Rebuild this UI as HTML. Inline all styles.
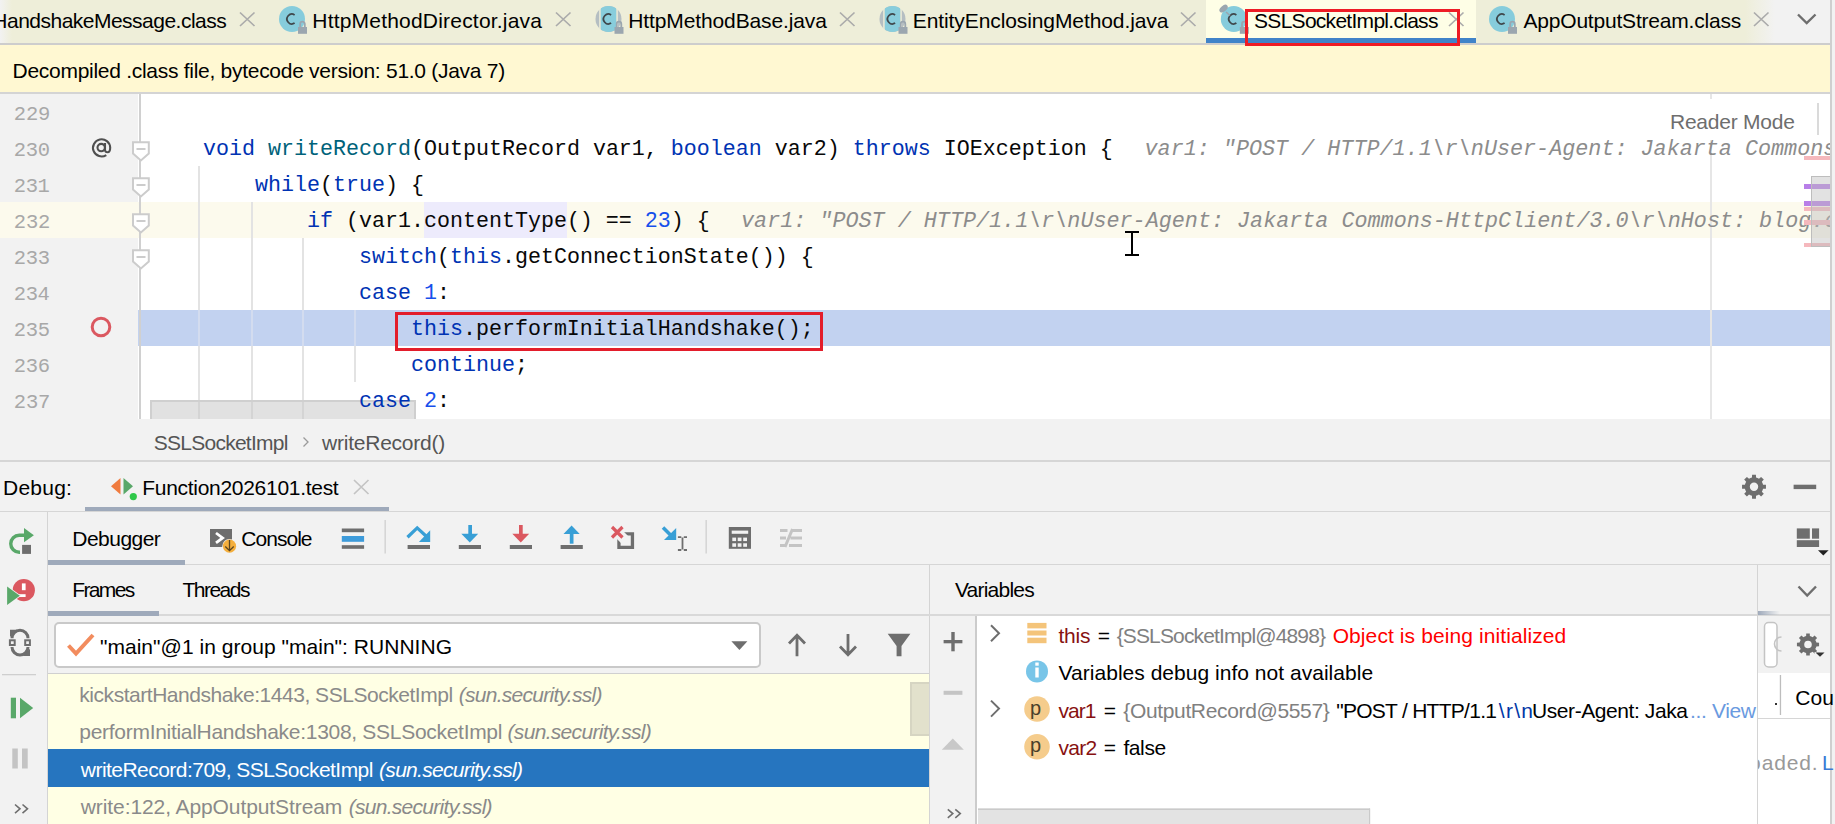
<!DOCTYPE html>
<html><head><meta charset="utf-8"><style>
html,body{margin:0;padding:0;width:1835px;height:824px;overflow:hidden;background:#F2F2F2;}
#root{position:relative;width:1835px;height:824px;overflow:hidden;}
#root div{position:absolute;white-space:pre;}
#root svg{position:absolute;overflow:visible;}
</style></head><body><div id="root">
<div style="left:0px;top:0px;width:1835px;height:43px;background:#EEEED9;"></div>
<div style="left:1206px;top:0px;width:270px;height:38px;background:#FEFEE6;"></div>
<div style="left:1206px;top:38px;width:270px;height:7px;background:#4083C9;"></div>
<div style="left:1745px;top:0px;width:90px;height:43px;background:linear-gradient(90deg,rgba(242,242,242,0) 0px,#F2F2F2 30px);"></div>
<div style="left:0px;top:0px;width:12px;height:43px;background:linear-gradient(90deg,#F2F2F2 0px,rgba(238,238,217,0) 12px);"></div>
<div style="left:0px;top:43px;width:1830px;height:2px;background:#CDCDCD;"></div>
<div style="left:0px;top:45px;width:1830px;height:47px;background:#FFF8D2;"></div>
<div style="left:0px;top:92px;width:1830px;height:2px;background:#D4D4D4;"></div>
<div style="left:0px;top:94px;width:1830px;height:325px;background:#FFFFFF;"></div>
<div style="left:0px;top:94px;width:138px;height:325px;background:#F2F2F2;"></div>
<div style="left:0px;top:202px;width:1830px;height:36px;background:#FCFAED;"></div>
<div style="left:424px;top:202px;width:143px;height:36px;background:#EDEBFC;"></div>
<div style="left:138px;top:310px;width:1692px;height:36px;background:#C2D2F0;"></div>
<div style="left:139px;top:94px;width:2px;height:325px;background:#D0D0D0;"></div>
<div style="left:198px;top:166px;width:2px;height:253px;background:#E3E3E3;"></div>
<div style="left:251px;top:202px;width:2px;height:217px;background:#E3E3E3;"></div>
<div style="left:302px;top:238px;width:2px;height:181px;background:#E3E3E3;"></div>
<div style="left:354px;top:310px;width:2px;height:72px;background:#E3E3E3;"></div>
<div style="left:198px;top:310px;width:2px;height:36px;background:#D3DCEF;"></div>
<div style="left:251px;top:310px;width:2px;height:36px;background:#D3DCEF;"></div>
<div style="left:302px;top:310px;width:2px;height:36px;background:#D3DCEF;"></div>
<div style="left:354px;top:310px;width:2px;height:36px;background:#D3DCEF;"></div>
<div style="left:1710px;top:94px;width:2px;height:325px;background:#E6E6E6;"></div>
<div style="left:1640px;top:99px;width:190px;height:41px;background:#FFFFFF;"></div>
<svg style="left:131px;top:141px" width="20" height="21" viewBox="0 0 20 21"><path d="M2 1.2 H17.8 V12.5 L9.9 19.5 L2 12.5 Z" fill="#FFFFFF" stroke="#CCCCCC" stroke-width="2"/><rect x="5.5" y="7" width="9" height="2" fill="#CCCCCC"/></svg>
<svg style="left:131px;top:177px" width="20" height="21" viewBox="0 0 20 21"><path d="M2 1.2 H17.8 V12.5 L9.9 19.5 L2 12.5 Z" fill="#FFFFFF" stroke="#CCCCCC" stroke-width="2"/><rect x="5.5" y="7" width="9" height="2" fill="#CCCCCC"/></svg>
<svg style="left:131px;top:213px" width="20" height="21" viewBox="0 0 20 21"><path d="M2 1.2 H17.8 V12.5 L9.9 19.5 L2 12.5 Z" fill="#FFFFFF" stroke="#CCCCCC" stroke-width="2"/><rect x="5.5" y="7" width="9" height="2" fill="#CCCCCC"/></svg>
<svg style="left:131px;top:249px" width="20" height="21" viewBox="0 0 20 21"><path d="M2 1.2 H17.8 V12.5 L9.9 19.5 L2 12.5 Z" fill="#FFFFFF" stroke="#CCCCCC" stroke-width="2"/><rect x="5.5" y="7" width="9" height="2" fill="#CCCCCC"/></svg>
<svg style="left:89px;top:314px" width="24" height="26"><circle cx="12" cy="13" r="8.8" fill="none" stroke="#DB5860" stroke-width="3"/></svg>
<div style="left:150px;top:400px;width:266px;height:19px;background:rgba(200,200,200,0.55);border:2px solid #CFCFCF;border-bottom:none;box-sizing:border-box;"></div>
<div style="left:0px;top:419px;width:1830px;height:41px;background:#F2F2F2;"></div>
<div style="left:0px;top:460px;width:1830px;height:2px;background:#D6D6D6;"></div>
<div style="left:1830px;top:0px;width:2px;height:824px;background:#CFCFCF;"></div>
<div style="left:1832px;top:0px;width:3px;height:824px;background:#F2F2F2;"></div>
<div style="left:0px;top:462px;width:1830px;height:49px;background:#F2F2F2;"></div>
<div style="left:85px;top:507px;width:304px;height:4px;background:#9FAABB;"></div>
<div style="left:0px;top:511px;width:1830px;height:1px;background:#D6D6D6;"></div>
<div style="left:47px;top:512px;width:1px;height:312px;background:#D4D4D4;"></div>
<div style="left:48px;top:564px;width:1782px;height:1px;background:#D6D6D6;"></div>
<div style="left:48px;top:560px;width:137px;height:5px;background:#9FAABB;"></div>
<div style="left:48px;top:614px;width:881px;height:2px;background:#D9D9D9;"></div>
<div style="left:48px;top:611px;width:111px;height:5px;background:#9FAABB;"></div>
<div style="left:929px;top:565px;width:1px;height:259px;background:#D4D4D4;"></div>
<div style="left:929px;top:614px;width:829px;height:2px;background:#D9D9D9;"></div>
<div style="left:1757px;top:565px;width:1px;height:259px;background:#D4D4D4;"></div>
<div style="left:1758px;top:614px;width:72px;height:2px;background:#D9D9D9;"></div>
<div style="left:48px;top:673px;width:881px;height:1px;background:#D0D0D0;"></div>
<div style="left:48px;top:674px;width:881px;height:150px;background:#FFFFE4;"></div>
<div style="left:48px;top:749px;width:881px;height:38px;background:#2675BF;"></div>
<div style="left:975px;top:616px;width:2px;height:208px;background:#CCCCCC;"></div>
<div style="left:977px;top:616px;width:780px;height:208px;background:#FFFFFF;"></div>
<div style="left:1758px;top:616px;width:72px;height:57px;background:#F2F2F2;"></div>
<div style="left:1758px;top:673px;width:72px;height:151px;background:#FFFFFF;"></div>
<div style="left:1758px;top:718px;width:72px;height:1px;background:#D6D6D6;"></div>
<div style="left:54px;top:622px;width:707px;height:46px;background:#FFFFFF;border:2px solid #C9C9C9;border-radius:5px;box-sizing:border-box;"></div>
<div style="left:910px;top:682px;width:19px;height:54px;background:#E2E1CC;border:2px solid #D6D5C2;border-right:none;box-sizing:border-box;"></div>
<svg style="left:0;top:0" width="1835" height="824"><circle cx="292" cy="19" r="13" fill="#86CCDC"/><path d="M294.6 14.9 A4.9 4.9 0 1 0 294.6 23.1" fill="none" stroke="#3F474B" stroke-width="1.8"/><path d="M300.2 27.5 V24 A2.3 2.3 0 0 1 304.8 24 V27.5" fill="none" stroke="#9BA6AF" stroke-width="1.8"/><rect x="298" y="27" width="9" height="6.8" fill="#9BA6AF"/><clipPath id="cp608"><rect x="600.8" y="5" width="15.4" height="28"/></clipPath><circle cx="608.5" cy="19" r="13" fill="#B5BEC2"/><rect x="599.2" y="5" width="1.6" height="28" fill="#EEEED9"/><rect x="616.2" y="5" width="1.6" height="28" fill="#EEEED9"/><circle cx="608.5" cy="19" r="13" fill="#88CDDC" clip-path="url(#cp608)"/><path d="M611.1 14.9 A4.9 4.9 0 1 0 611.1 23.1" fill="none" stroke="#3F474B" stroke-width="1.8"/><path d="M616.7 27.5 V24 A2.3 2.3 0 0 1 621.3 24 V27.5" fill="none" stroke="#9BA6AF" stroke-width="1.8"/><rect x="614.5" y="27" width="9" height="6.8" fill="#9BA6AF"/><clipPath id="cp892"><rect x="884.8" y="5" width="15.4" height="28"/></clipPath><circle cx="892.5" cy="19" r="13" fill="#B5BEC2"/><rect x="883.2" y="5" width="1.6" height="28" fill="#EEEED9"/><rect x="900.2" y="5" width="1.6" height="28" fill="#EEEED9"/><circle cx="892.5" cy="19" r="13" fill="#88CDDC" clip-path="url(#cp892)"/><path d="M895.1 14.9 A4.9 4.9 0 1 0 895.1 23.1" fill="none" stroke="#3F474B" stroke-width="1.8"/><path d="M900.7 27.5 V24 A2.3 2.3 0 0 1 905.3 24 V27.5" fill="none" stroke="#9BA6AF" stroke-width="1.8"/><rect x="898.5" y="27" width="9" height="6.8" fill="#9BA6AF"/><circle cx="1233.8" cy="19" r="13" fill="#86CCDC"/><path d="M1236.3999999999999 14.9 A4.9 4.9 0 1 0 1236.3999999999999 23.1" fill="none" stroke="#3F474B" stroke-width="1.8"/><path d="M1242.0 27.5 V24 A2.3 2.3 0 0 1 1246.6 24 V27.5" fill="none" stroke="#9BA6AF" stroke-width="1.8"/><rect x="1239.8" y="27" width="9" height="6.8" fill="#9BA6AF"/><circle cx="1502" cy="19" r="13" fill="#86CCDC"/><path d="M1504.6 14.9 A4.9 4.9 0 1 0 1504.6 23.1" fill="none" stroke="#3F474B" stroke-width="1.8"/><path d="M1510.2 27.5 V24 A2.3 2.3 0 0 1 1514.8 24 V27.5" fill="none" stroke="#9BA6AF" stroke-width="1.8"/><rect x="1508" y="27" width="9" height="6.8" fill="#9BA6AF"/><ellipse cx="1223.6" cy="8.6" rx="4.8" ry="2.9" transform="rotate(-40 1223.6 8.6)" fill="#9BA6AF"/><path d="M1226 12 L1230 15.5" stroke="#9BA6AF" stroke-width="1.6"/><path d="M240 12.5 L254.5 26 M254.5 12.5 L240 26" stroke="#ABABAB" stroke-width="1.7" fill="none"/><path d="M556 12.5 L570.5 26 M570.5 12.5 L556 26" stroke="#ABABAB" stroke-width="1.7" fill="none"/><path d="M840 12.5 L854.5 26 M854.5 12.5 L840 26" stroke="#ABABAB" stroke-width="1.7" fill="none"/><path d="M1181 12.5 L1195.5 26 M1195.5 12.5 L1181 26" stroke="#ABABAB" stroke-width="1.7" fill="none"/><path d="M1449 12.5 L1463.5 26 M1463.5 12.5 L1449 26" stroke="#ABABAB" stroke-width="1.7" fill="none"/><path d="M1754 12.5 L1768.5 26 M1768.5 12.5 L1754 26" stroke="#ABABAB" stroke-width="1.7" fill="none"/><circle cx="101.2" cy="147.6" r="3.7" stroke="#505050" stroke-width="2.1" fill="none"/><path d="M105 143 V150 Q105.2 152.3 107.6 152.3 Q110.2 152.3 110.2 147.6 A8.6 8.6 0 1 0 106.3 155.1" stroke="#505050" stroke-width="2.1" fill="none"/><path d="M1798 14.5 L1806.7 23 L1815.5 14.5" fill="none" stroke="#6E6E6E" stroke-width="2.4"/><path d="M120.5 478 L111 486.2 L120.5 494.5 Z" fill="#F07B3F"/><path d="M123.5 478 L133 486.2 L123.5 494.5 Z" fill="#59A869"/><circle cx="133.3" cy="496.6" r="4.6" fill="#F2F2F2"/><circle cx="133.3" cy="496.6" r="3.6" fill="#2FC84A"/><path d="M354 480 L368.5 494 M368.5 480 L354 494" stroke="#C4C4C4" stroke-width="1.7" fill="none"/><path d="M1763.08,484.67 L1765.95,484.77 L1765.95,488.63 L1763.08,488.73 L1762.59,490.26 L1761.85,491.68 L1763.81,493.78 L1761.08,496.51 L1758.98,494.55 L1757.56,495.29 L1756.03,495.78 L1755.93,498.65 L1752.07,498.65 L1751.97,495.78 L1750.44,495.29 L1749.02,494.55 L1746.92,496.51 L1744.19,493.78 L1746.15,491.68 L1745.41,490.26 L1744.92,488.73 L1742.05,488.63 L1742.05,484.77 L1744.92,484.67 L1745.41,483.14 L1746.15,481.72 L1744.19,479.62 L1746.92,476.89 L1749.02,478.85 L1750.44,478.11 L1751.97,477.62 L1752.07,474.75 L1755.93,474.75 L1756.03,477.62 L1757.56,478.11 L1758.98,478.85 L1761.08,476.89 L1763.81,479.62 L1761.85,481.72 L1762.59,483.14 Z M1758.2,486.7 A4.2 4.2 0 1 0 1749.8,486.7 A4.2 4.2 0 1 0 1758.2,486.7 Z" fill="#6E6E6E" fill-rule="evenodd"/><rect x="1793.6" y="484.7" width="22.6" height="4.4" fill="#6E6E6E"/><path d="M24 535.2 H19.25 A8.5 8.5 0 0 0 19.25 552.2 H20" fill="none" stroke="#59A869" stroke-width="3.4"/><path d="M24 528.1 L24 542.3 L33.9 535.3 Z" fill="#59A869"/><rect x="22.1" y="544.9" width="8.9" height="9" fill="#6E6E6E"/><circle cx="23.8" cy="590.2" r="11.1" fill="#DB5860"/><rect x="21.9" y="583.4" width="3.7" height="6.8" fill="#FFFFFF"/><rect x="19" y="594.2" width="6.6" height="2.8" fill="#FFFFFF"/><path d="M7.1 586.5 L7.1 605.1 L19.8 595.8 Z" fill="#59A869" stroke="#F2F2F2" stroke-width="1.6" paint-order="stroke"/><path d="M12 638.3 A8 8 0 0 1 28 638.3" fill="none" stroke="#6E6E6E" stroke-width="3"/><path d="M10 629.8 L17 629.8 L10 637 Z" fill="#6E6E6E"/><path d="M28 647 A8 8 0 0 1 12 647" fill="none" stroke="#6E6E6E" stroke-width="3"/><path d="M30 648.7 L30 656 L23 656 Z" fill="#6E6E6E"/><rect x="9.9" y="640.3" width="4.8" height="4.7" fill="none" stroke="#6E6E6E" stroke-width="2"/><rect x="25.2" y="640.3" width="4.7" height="4.7" fill="none" stroke="#6E6E6E" stroke-width="2"/><rect x="2" y="674" width="34" height="1.3" fill="#CFCFCF"/><rect x="10.8" y="697.7" width="5.2" height="20.6" fill="#59A869"/><path d="M20 697.7 L33.2 708 L20 718.3 Z" fill="#59A869"/><rect x="12.3" y="748.5" width="5.5" height="20" fill="#C4C4C4"/><rect x="22" y="748.5" width="5.7" height="20" fill="#C4C4C4"/><path d="M15 804.5 L20 808.8 L15 813.1 M22.5 804.5 L27.5 808.8 L22.5 813.1" fill="none" stroke="#6E6E6E" stroke-width="1.6"/><rect x="210" y="529" width="22" height="18" fill="#6E6E6E"/><path d="M216 533 L222.6 537.9 L216 542.8" fill="none" stroke="#FFFFFF" stroke-width="2.8"/><circle cx="229.5" cy="546.2" r="7.2" fill="#F2F2F2"/><circle cx="229.5" cy="546.2" r="6.6" fill="#F4AF3D"/><path d="M229.5 540 V550.5 M225.3 546.5 L229.5 550.6 L233.7 546.5" fill="none" stroke="#5A4520" stroke-width="1.3"/><rect x="341.8" y="528.5" width="22.3" height="3.7" fill="#6E6E6E"/><rect x="341.8" y="536" width="22.3" height="5.8" fill="#3D9BDA"/><rect x="341.8" y="545.2" width="22.3" height="3.6" fill="#6E6E6E"/><rect x="384.5" y="520" width="1.3" height="33.5" fill="#CFCFCF"/><rect x="705.5" y="520" width="1.3" height="33.5" fill="#CFCFCF"/><path d="M407.5 537.3 L417.2 527.9 L426.5 536.5" fill="none" stroke="#389FD6" stroke-width="3.3"/><path d="M430.2 530.2 L430.2 541.9 L418.9 541.9 Z" fill="#389FD6"/><rect x="407.6" y="545" width="22.399999999999977" height="4" fill="#6E6E6E"/><rect x="468.3" y="525" width="3.7" height="10" fill="#389FD6"/><path d="M461.3 533.8 L478.2 533.8 L469.8 542.6 Z" fill="#389FD6"/><rect x="458.8" y="545" width="22.19999999999999" height="4" fill="#6E6E6E"/><rect x="519" y="525" width="3.7" height="10" fill="#DB5860"/><path d="M512.3 533.8 L529.2 533.8 L520.8 542.6 Z" fill="#DB5860"/><rect x="509.8" y="545" width="22.19999999999999" height="4" fill="#6E6E6E"/><path d="M563.5 534 L571.6 525.6 L579.7 534 Z" fill="#389FD6"/><rect x="569.8" y="533.5" width="3.7" height="10.2" fill="#389FD6"/><rect x="560.6" y="545" width="22.199999999999932" height="4" fill="#6E6E6E"/><path d="M617.3 532.3 H634.1 V549 H617.3 Z M620.6 535.6 V545.7 H630.8 V535.6 Z" fill="#6E6E6E" fill-rule="evenodd"/><path d="M612 527 L625.5 540.5" stroke="#F2F2F2" stroke-width="10"/><path d="M612 527 L622.5 537.5 M622.5 527 L612 537.5" stroke="#DB5860" stroke-width="3.2"/><path d="M663 527.5 L671 535.5" stroke="#389FD6" stroke-width="3.6"/><path d="M676.2 528 L676.2 540 L664 540 Z" fill="#389FD6"/><path d="M677.9 537.1 H681.3 M683.8 537.1 H687 M677.9 550 H681.3 M683.8 550 H687 M682.5 537.5 V549.6" fill="none" stroke="#6E6E6E" stroke-width="1.8"/><rect x="728.8" y="527" width="22.2" height="21.8" fill="#6E6E6E"/><rect x="731.7" y="530.6" width="16.5" height="3.2" fill="#F2F2F2"/><rect x="732.3" y="537.6" width="3.8" height="3.5" fill="#F2F2F2"/><rect x="732.3" y="543.3" width="3.8" height="3.5" fill="#F2F2F2"/><rect x="737.7" y="537.6" width="3.8" height="3.5" fill="#F2F2F2"/><rect x="737.7" y="543.3" width="3.8" height="3.5" fill="#F2F2F2"/><rect x="743.2" y="537.6" width="3.8" height="3.5" fill="#F2F2F2"/><rect x="743.2" y="543.3" width="3.8" height="3.5" fill="#F2F2F2"/><path d="M780 530.4 H787.5 M791.5 530.4 H802 M780 538 H786 M790.5 538 H802 M780 545.6 H784.5 M789 545.6 H802 M785 547 L792.5 529" fill="none" stroke="#C4C4C4" stroke-width="3"/><rect x="1796.8" y="528.4" width="13" height="10.3" fill="#6E6E6E"/><rect x="1812" y="528.4" width="7.1" height="10.3" fill="#6E6E6E"/><rect x="1796.8" y="540.2" width="22.3" height="6.8" fill="#6E6E6E"/><path d="M1818 550.3 L1828.6 550.3 L1823.3 555.5 Z" fill="#222"/><path d="M1798.5 586.5 L1807.2 595.5 L1816 586.5" fill="none" stroke="#6E6E6E" stroke-width="2.4"/><path d="M68.5 645.5 L76 653.5 L93 635" fill="none" stroke="#F28C5E" stroke-width="4"/><path d="M731.4 641.2 L747.4 641.2 L739.4 650.1 Z" fill="#6E6E6E"/><path d="M797 656.2 V635.5 M789 643.5 L797 635.3 L805 643.5" fill="none" stroke="#6E6E6E" stroke-width="2.8"/><path d="M848 634 V654.5 M840 646.5 L848 654.7 L856 646.5" fill="none" stroke="#6E6E6E" stroke-width="2.8"/><path d="M887.7 633.8 H910.4 L901.5 646 V656.2 H896.6 V646 Z" fill="#6E6E6E"/><rect x="943.6" y="640" width="18.8" height="3.3" fill="#6E6E6E"/><rect x="951.3" y="632" width="3.4" height="19.3" fill="#6E6E6E"/><rect x="943.6" y="690.8" width="18.8" height="4" fill="#C4C4C4"/><path d="M941.8 749.8 L952.8 738.6 L963.8 749.8 Z" fill="#C8C8C8"/><path d="M947.8 809.3 L952.8 813.5999999999999 L947.8 817.9 M955.3 809.3 L960.3 813.5999999999999 L955.3 817.9" fill="none" stroke="#6E6E6E" stroke-width="1.6"/><rect x="978" y="808.5" width="392" height="16" fill="#E3E3E3"/><rect x="978" y="808.5" width="392" height="1.5" fill="#CACACA"/><rect x="1369" y="808.5" width="1.2" height="16" fill="#CACACA"/><path d="M991 625.3 L999 633.3 L991 641.3" fill="none" stroke="#6E6E6E" stroke-width="2"/><path d="M991 700.6 L999 708.6 L991 716.6" fill="none" stroke="#6E6E6E" stroke-width="2"/><rect x="1027.3" y="622.9" width="19.2" height="5.5" fill="#F4C47A"/><rect x="1027.3" y="630.5" width="19.2" height="5" fill="#F4C47A"/><rect x="1027.3" y="637.7" width="19.2" height="5.5" fill="#F4C47A"/><circle cx="1037" cy="671.4" r="11" fill="#78C5E8"/><rect x="1035.3" y="662.5" width="3.4" height="3.2" fill="#FFF"/><rect x="1035.3" y="667.5" width="3.4" height="10" fill="#FFF"/><circle cx="1037" cy="709" r="12.8" fill="#F5CC8C"/><circle cx="1037" cy="746.7" r="12.8" fill="#F5CC8C"/><rect x="1764.5" y="622.5" width="12.5" height="44.5" rx="4" fill="#FFFFFF" stroke="#C4C4C4" stroke-width="1.5"/><path d="M1781.5 637 A7 7 0 0 0 1781.5 651" fill="none" stroke="#C4C4C4" stroke-width="1.6"/><path d="M1816.39,642.62 L1819.06,642.72 L1819.06,646.28 L1816.39,646.38 L1815.95,647.79 L1815.26,649.11 L1817.08,651.06 L1814.56,653.58 L1812.61,651.76 L1811.29,652.45 L1809.88,652.89 L1809.78,655.56 L1806.22,655.56 L1806.12,652.89 L1804.71,652.45 L1803.39,651.76 L1801.44,653.58 L1798.92,651.06 L1800.74,649.11 L1800.05,647.79 L1799.61,646.38 L1796.94,646.28 L1796.94,642.72 L1799.61,642.62 L1800.05,641.21 L1800.74,639.89 L1798.92,637.94 L1801.44,635.42 L1803.39,637.24 L1804.71,636.55 L1806.12,636.11 L1806.22,633.44 L1809.78,633.44 L1809.88,636.11 L1811.29,636.55 L1812.61,637.24 L1814.56,635.42 L1817.08,637.94 L1815.26,639.89 L1815.95,641.21 Z M1811.8,644.5 A3.8 3.8 0 1 0 1804.2,644.5 A3.8 3.8 0 1 0 1811.8,644.5 Z" fill="#6E6E6E" fill-rule="evenodd"/><path d="M1814 652 L1825 652 L1819.5 657 Z" fill="#F2F2F2"/><path d="M1815.5 652.5 L1824.5 652.5 L1820 656.8 Z" fill="#333"/><rect x="1779.8" y="675" width="1.3" height="40" fill="#BDBDBD"/><rect x="1775" y="703" width="2" height="2" fill="#333"/><defs><linearGradient id="mg"><stop offset="0" stop-color="#9FAABB"/><stop offset="1" stop-color="#9FAABB" stop-opacity="0"/></linearGradient></defs><rect x="1758" y="611" width="22" height="4" fill="url(#mg)"/></svg>
<div style="left:-7.68px;top:10.22px;font-family:'Liberation Sans',sans-serif;font-size:21px;line-height:21px;color:#000;letter-spacing:-0.512px;">HandshakeMessage.class</div>
<div style="left:312.32px;top:10.22px;font-family:'Liberation Sans',sans-serif;font-size:21px;line-height:21px;color:#000;letter-spacing:0.198px;">HttpMethodDirector.java</div>
<div style="left:628.32px;top:10.22px;font-family:'Liberation Sans',sans-serif;font-size:21px;line-height:21px;color:#000;letter-spacing:-0.121px;">HttpMethodBase.java</div>
<div style="left:912.82px;top:10.22px;font-family:'Liberation Sans',sans-serif;font-size:21px;line-height:21px;color:#000;letter-spacing:-0.096px;">EntityEnclosingMethod.java</div>
<div style="left:1254.06px;top:10.22px;font-family:'Liberation Sans',sans-serif;font-size:21px;line-height:21px;color:#000;letter-spacing:-0.717px;">SSLSocketImpl.class</div>
<div style="left:1523.50px;top:10.22px;font-family:'Liberation Sans',sans-serif;font-size:21px;line-height:21px;color:#000;letter-spacing:-0.201px;">AppOutputStream.class</div>
<div style="left:12.52px;top:59.82px;font-family:'Liberation Sans',sans-serif;font-size:21px;line-height:21px;color:#000;letter-spacing:-0.279px;">Decompiled .class file, bytecode version: 51.0 (Java 7)</div>
<div style="left:13.87px;top:105.29px;font-family:'Liberation Mono',monospace;font-size:20.5px;line-height:20.5px;color:#A8A8A8;letter-spacing:-0.265px;">229</div>
<div style="left:13.87px;top:141.29px;font-family:'Liberation Mono',monospace;font-size:20.5px;line-height:20.5px;color:#A8A8A8;letter-spacing:-0.367px;">230</div>
<div style="left:13.87px;top:177.29px;font-family:'Liberation Mono',monospace;font-size:20.5px;line-height:20.5px;color:#A8A8A8;letter-spacing:-0.521px;">231</div>
<div style="left:13.87px;top:213.29px;font-family:'Liberation Mono',monospace;font-size:20.5px;line-height:20.5px;color:#A8A8A8;letter-spacing:-0.265px;">232</div>
<div style="left:13.87px;top:249.29px;font-family:'Liberation Mono',monospace;font-size:20.5px;line-height:20.5px;color:#A8A8A8;letter-spacing:-0.367px;">233</div>
<div style="left:13.87px;top:285.29px;font-family:'Liberation Mono',monospace;font-size:20.5px;line-height:20.5px;color:#A8A8A8;letter-spacing:-0.470px;">234</div>
<div style="left:13.87px;top:321.29px;font-family:'Liberation Mono',monospace;font-size:20.5px;line-height:20.5px;color:#A8A8A8;letter-spacing:-0.367px;">235</div>
<div style="left:13.87px;top:357.29px;font-family:'Liberation Mono',monospace;font-size:20.5px;line-height:20.5px;color:#A8A8A8;letter-spacing:-0.316px;">236</div>
<div style="left:13.87px;top:393.29px;font-family:'Liberation Mono',monospace;font-size:20.5px;line-height:20.5px;color:#A8A8A8;letter-spacing:-0.214px;">237</div>
<div style="left:151px;top:139.40px;font-family:'Liberation Mono',monospace;font-size:21.667px;line-height:21.667px;"><span style="color:#080808;">    </span><span style="color:#0033B3;">void</span><span style="color:#080808;"> </span><span style="color:#00627A;">writeRecord</span><span style="color:#080808;">(OutputRecord var1, </span><span style="color:#0033B3;">boolean</span><span style="color:#080808;"> var2) </span><span style="color:#0033B3;">throws</span><span style="color:#080808;"> IOException {</span></div>
<div style="left:1131.5px;top:139.34px;font-family:'Liberation Mono',monospace;font-size:21.75px;line-height:21.75px;"><span style="color:#8C8C8C;font-style:italic;"> var1: &quot;POST / HTTP/1.1\r\nUser-Agent: Jakarta Commons-HttpClient/3.0\r\nHost</span></div>
<div style="left:151px;top:175.40px;font-family:'Liberation Mono',monospace;font-size:21.667px;line-height:21.667px;"><span style="color:#080808;">        </span><span style="color:#0033B3;">while</span><span style="color:#080808;">(</span><span style="color:#0033B3;">true</span><span style="color:#080808;">) {</span></div>
<div style="left:151px;top:211.40px;font-family:'Liberation Mono',monospace;font-size:21.667px;line-height:21.667px;"><span style="color:#080808;">            </span><span style="color:#0033B3;">if</span><span style="color:#080808;"> (var1.contentType() == </span><span style="color:#1750EB;">23</span><span style="color:#080808;">) {</span></div>
<div style="left:728px;top:211.34px;font-family:'Liberation Mono',monospace;font-size:21.75px;line-height:21.75px;"><span style="color:#8C8C8C;font-style:italic;"> var1: &quot;POST / HTTP/1.1\r\nUser-Agent: Jakarta Commons-HttpClient/3.0\r\nHost: blog.csdn.net</span></div>
<div style="left:151px;top:247.40px;font-family:'Liberation Mono',monospace;font-size:21.667px;line-height:21.667px;"><span style="color:#080808;">                </span><span style="color:#0033B3;">switch</span><span style="color:#080808;">(</span><span style="color:#0033B3;">this</span><span style="color:#080808;">.getConnectionState()) {</span></div>
<div style="left:151px;top:283.40px;font-family:'Liberation Mono',monospace;font-size:21.667px;line-height:21.667px;"><span style="color:#080808;">                </span><span style="color:#0033B3;">case</span><span style="color:#080808;"> </span><span style="color:#1750EB;">1</span><span style="color:#080808;">:</span></div>
<div style="left:151px;top:319.40px;font-family:'Liberation Mono',monospace;font-size:21.667px;line-height:21.667px;"><span style="color:#080808;">                    </span><span style="color:#0033B3;">this</span><span style="color:#080808;">.performInitialHandshake();</span></div>
<div style="left:151px;top:355.40px;font-family:'Liberation Mono',monospace;font-size:21.667px;line-height:21.667px;"><span style="color:#080808;">                    </span><span style="color:#0033B3;">continue</span><span style="color:#080808;">;</span></div>
<div style="left:151px;top:391.40px;font-family:'Liberation Mono',monospace;font-size:21.667px;line-height:21.667px;"><span style="color:#080808;">                </span><span style="color:#0033B3;">case</span><span style="color:#080808;"> </span><span style="color:#1750EB;">2</span><span style="color:#080808;">:</span></div>
<div style="left:1830px;top:94px;width:2px;height:325px;background:#CFCFCF;"></div>
<div style="left:1832px;top:94px;width:3px;height:325px;background:#F2F2F2;"></div>
<div style="left:1245px;top:9px;width:215px;height:37px;background:transparent;border:3px solid #EE1C25;box-sizing:border-box;"></div>
<div style="left:395px;top:312px;width:428px;height:39px;background:transparent;border:3px solid #E31D2B;box-sizing:border-box;"></div>
<div style="left:1670.02px;top:111.02px;font-family:'Liberation Sans',sans-serif;font-size:21px;line-height:21px;color:#6E6E6E;letter-spacing:-0.244px;">Reader Mode</div>
<div style="left:1817px;top:103px;width:2px;height:32px;background:#DADADA;"></div>
<div style="left:1804px;top:156px;width:26px;height:4px;background:#F5B8BD;"></div>
<div style="left:1804px;top:184px;width:26px;height:5px;background:#B87FE8;"></div>
<div style="left:1804px;top:201px;width:26px;height:5px;background:#B87FE8;"></div>
<div style="left:1804px;top:207px;width:26px;height:4px;background:#F5B8BD;"></div>
<div style="left:1804px;top:220px;width:26px;height:5px;background:#F5B8BD;"></div>
<div style="left:1804px;top:243px;width:26px;height:4px;background:#F5B8BD;"></div>
<div style="left:1811px;top:176px;width:19px;height:71px;background:rgba(190,190,190,0.45);border:1.5px solid #BDBDBD;border-right:none;box-sizing:border-box;"></div>
<div style="left:1125px;top:231px;width:14px;height:2px;background:#000;"></div>
<div style="left:1131px;top:232px;width:2px;height:23px;background:#000;"></div>
<div style="left:1125px;top:254px;width:14px;height:2px;background:#000;"></div>
<div style="left:153.75px;top:432.22px;font-family:'Liberation Sans',sans-serif;font-size:21px;line-height:21px;color:#555555;letter-spacing:-0.744px;">SSLSocketImpl</div>
<div style="left:322.11px;top:432.22px;font-family:'Liberation Sans',sans-serif;font-size:21px;line-height:21px;color:#555555;letter-spacing:-0.246px;">writeRecord()</div>
<svg style="left:302px;top:436px" width="8" height="12"><path d="M1.5 1.5 L6 6 L1.5 10.5" fill="none" stroke="#9A9A9A" stroke-width="1.3"/></svg>
<div style="left:3.12px;top:476.62px;font-family:'Liberation Sans',sans-serif;font-size:21px;line-height:21px;color:#000;letter-spacing:0.209px;">Debug:</div>
<div style="left:142.22px;top:476.62px;font-family:'Liberation Sans',sans-serif;font-size:21px;line-height:21px;color:#000;letter-spacing:-0.291px;">Function2026101.test</div>
<div style="left:72.32px;top:528.02px;font-family:'Liberation Sans',sans-serif;font-size:21px;line-height:21px;color:#000;letter-spacing:-0.529px;">Debugger</div>
<div style="left:241.35px;top:528.02px;font-family:'Liberation Sans',sans-serif;font-size:21px;line-height:21px;color:#000;letter-spacing:-0.980px;">Console</div>
<div style="left:72.32px;top:579.12px;font-family:'Liberation Sans',sans-serif;font-size:21px;line-height:21px;color:#000;letter-spacing:-1.655px;">Frames</div>
<div style="left:182.58px;top:579.12px;font-family:'Liberation Sans',sans-serif;font-size:21px;line-height:21px;color:#000;letter-spacing:-1.536px;">Threads</div>
<div style="left:954.89px;top:579.12px;font-family:'Liberation Sans',sans-serif;font-size:21px;line-height:21px;color:#000;letter-spacing:-0.769px;">Variables</div>
<div style="left:99.96px;top:635.72px;font-family:'Liberation Sans',sans-serif;font-size:21px;line-height:21px;color:#000;letter-spacing:0.031px;">&quot;main&quot;@1 in group &quot;main&quot;: RUNNING</div>
<div style="left:79.34px;top:683.72px;font-family:'Liberation Sans',sans-serif;font-size:21px;line-height:21px;color:#8A8A8A;letter-spacing:-0.467px;">kickstartHandshake:1443, SSLSocketImpl</div>
<div style="left:458.66px;top:683.72px;font-family:'Liberation Sans',sans-serif;font-size:21px;line-height:21px;color:#8A8A8A;font-style:italic;letter-spacing:-0.713px;">(sun.security.ssl)</div>
<div style="left:79.34px;top:720.72px;font-family:'Liberation Sans',sans-serif;font-size:21px;line-height:21px;color:#8A8A8A;letter-spacing:-0.293px;">performInitialHandshake:1308, SSLSocketImpl</div>
<div style="left:507.56px;top:720.72px;font-family:'Liberation Sans',sans-serif;font-size:21px;line-height:21px;color:#8A8A8A;font-style:italic;letter-spacing:-0.690px;">(sun.security.ssl)</div>
<div style="left:80.81px;top:759.02px;font-family:'Liberation Sans',sans-serif;font-size:21px;line-height:21px;color:#FFFFFF;letter-spacing:-0.535px;">writeRecord:709, SSLSocketImpl</div>
<div style="left:379.06px;top:759.02px;font-family:'Liberation Sans',sans-serif;font-size:21px;line-height:21px;color:#FFFFFF;font-style:italic;letter-spacing:-0.707px;">(sun.security.ssl)</div>
<div style="left:80.81px;top:796.22px;font-family:'Liberation Sans',sans-serif;font-size:21px;line-height:21px;color:#8A8A8A;letter-spacing:-0.092px;">write:122, AppOutputStream</div>
<div style="left:348.66px;top:796.22px;font-family:'Liberation Sans',sans-serif;font-size:21px;line-height:21px;color:#8A8A8A;font-style:italic;letter-spacing:-0.707px;">(sun.security.ssl)</div>
<div style="left:1058.38px;top:625.02px;font-family:'Liberation Sans',sans-serif;font-size:21px;line-height:21px;color:#871111;letter-spacing:-0.202px;">this</div>
<div style="left:1097.86px;top:625.02px;font-family:'Liberation Sans',sans-serif;font-size:21px;line-height:21px;color:#000;">=</div>
<div style="left:1116.68px;top:625.02px;font-family:'Liberation Sans',sans-serif;font-size:21px;line-height:21px;color:#808080;letter-spacing:-0.859px;">{SSLSocketImpl@4898}</div>
<div style="left:1332.65px;top:625.02px;font-family:'Liberation Sans',sans-serif;font-size:21px;line-height:21px;color:#FF0000;letter-spacing:0.096px;">Object is being initialized</div>
<div style="left:1058.60px;top:662.12px;font-family:'Liberation Sans',sans-serif;font-size:21px;line-height:21px;color:#000;letter-spacing:0.025px;">Variables debug info not available</div>
<div style="left:1058.60px;top:699.72px;font-family:'Liberation Sans',sans-serif;font-size:21px;line-height:21px;color:#871111;letter-spacing:-1.032px;">var1</div>
<div style="left:1103.86px;top:699.72px;font-family:'Liberation Sans',sans-serif;font-size:21px;line-height:21px;color:#000;">=</div>
<div style="left:1123.28px;top:699.72px;font-family:'Liberation Sans',sans-serif;font-size:21px;line-height:21px;color:#808080;letter-spacing:-0.350px;">{OutputRecord@5557}</div>
<div style="left:1336.16px;top:699.72px;font-family:'Liberation Sans',sans-serif;font-size:21px;line-height:21px;color:#000;letter-spacing:-0.719px;">&quot;POST / HTTP/1.1</div>
<div style="left:1498.80px;top:699.72px;font-family:'Liberation Sans',sans-serif;font-size:21px;line-height:21px;color:#0037A6;letter-spacing:1.272px;">\r\n</div>
<div style="left:1532.02px;top:699.72px;font-family:'Liberation Sans',sans-serif;font-size:21px;line-height:21px;color:#000;letter-spacing:-0.424px;">User-Agent: Jaka</div>
<div style="left:1690.11px;top:699.72px;font-family:'Liberation Sans',sans-serif;font-size:21px;line-height:21px;color:#6A9AE0;letter-spacing:-0.378px;">...</div>
<div style="left:1711.89px;top:699.72px;font-family:'Liberation Sans',sans-serif;font-size:21px;line-height:21px;color:#6A9AE0;letter-spacing:-0.348px;">View</div>
<div style="left:1058.60px;top:737.32px;font-family:'Liberation Sans',sans-serif;font-size:21px;line-height:21px;color:#871111;letter-spacing:-0.732px;">var2</div>
<div style="left:1103.86px;top:737.32px;font-family:'Liberation Sans',sans-serif;font-size:21px;line-height:21px;color:#000;">=</div>
<div style="left:1123.39px;top:737.32px;font-family:'Liberation Sans',sans-serif;font-size:21px;line-height:21px;color:#000;letter-spacing:-0.390px;">false</div>
<div style="left:1030.10px;top:697.57px;font-family:'Liberation Sans',sans-serif;font-size:20px;line-height:20px;color:#4A3F2A;">p</div>
<div style="left:1030.10px;top:735.27px;font-family:'Liberation Sans',sans-serif;font-size:20px;line-height:20px;color:#4A3F2A;">p</div>
<div style="left:1795.35px;top:686.52px;font-family:'Liberation Sans',sans-serif;font-size:21px;line-height:21px;color:#000;">Cou</div>
<div style="left:0;top:0;width:1835px;height:824px;clip-path:inset(0 0 0 1758px)">
<div style="left:1743.63px;top:751.92px;font-family:'Liberation Sans',sans-serif;font-size:21px;line-height:21px;color:#999999;letter-spacing:0.828px;">loaded.</div>
</div>
<div style="left:1822.12px;top:751.92px;font-family:'Liberation Sans',sans-serif;font-size:21px;line-height:21px;color:#3A7BD5;">L</div>
</div></body></html>
